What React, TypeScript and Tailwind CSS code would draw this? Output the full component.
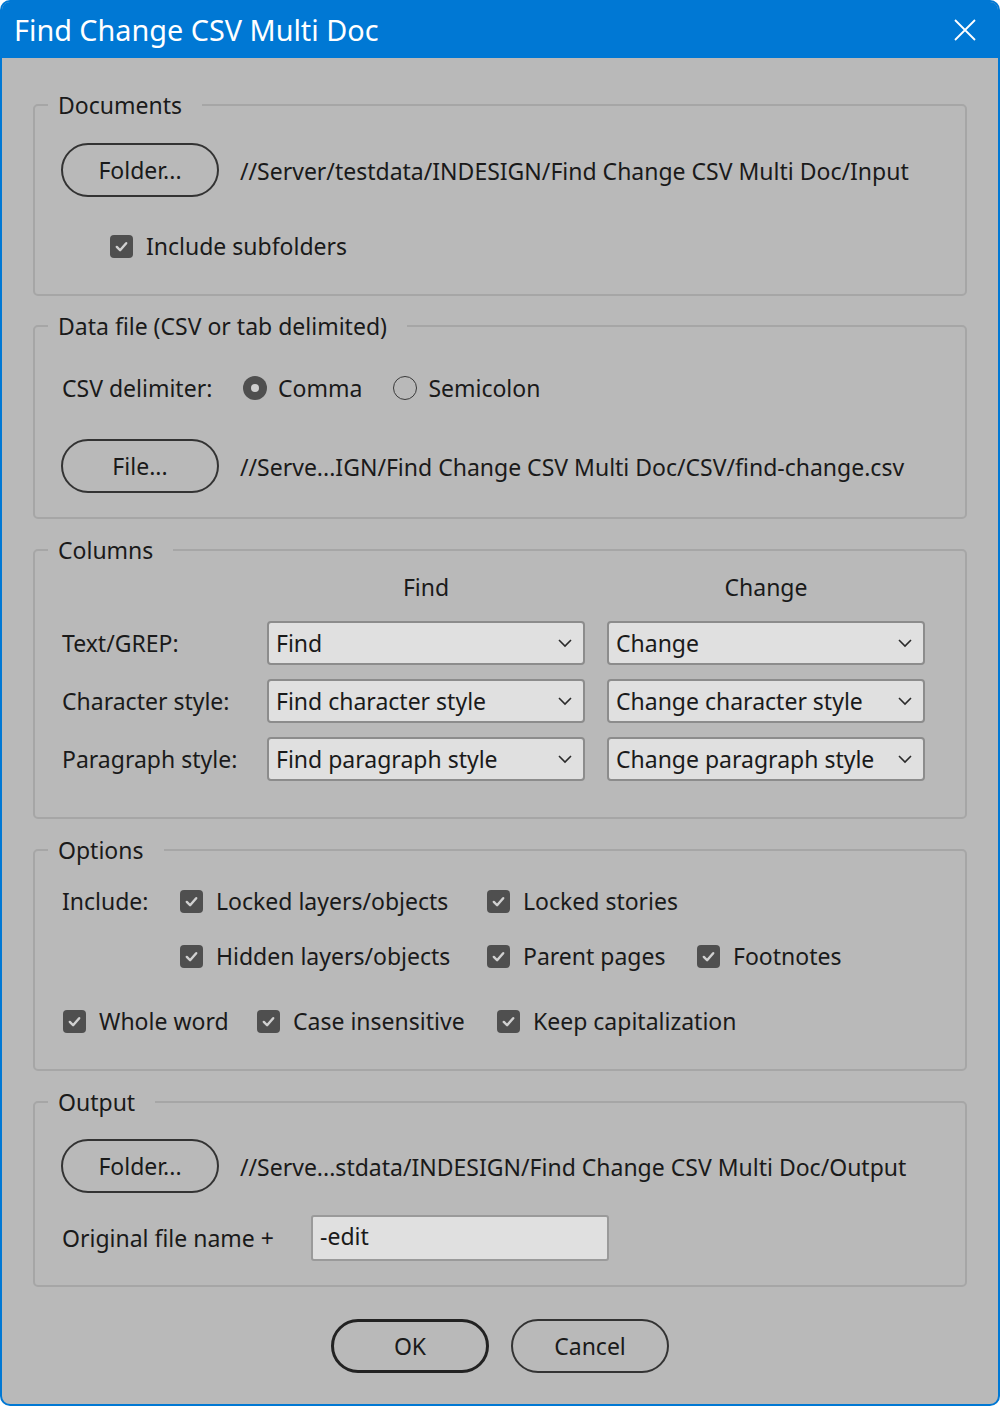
import React from "react";

const FONT = { fontFamily: '"Noto Sans", "Open Sans", sans-serif' } as React.CSSProperties;

function Check({ className = "" }: { className?: string }) {
  return (
    <span className={`inline-flex h-[23px] w-[23px] shrink-0 items-center justify-center rounded-[4px] bg-[#4f4f4f] ${className}`}>
      <svg width="15" height="15" viewBox="0 0 16 16" fill="none">
        <path d="M3 8.5 L6.5 12 L13 4.5" stroke="#d0d0d0" strokeWidth="2.6" strokeLinecap="round" strokeLinejoin="round" />
      </svg>
    </span>
  );
}

function CheckItem({ label, className = "" }: { label: string; className?: string }) {
  return (
    <div className={`flex h-[30px] items-center gap-[13px] ${className}`}>
      <Check />
      <span>{label}</span>
    </div>
  );
}

function Radio({ checked }: { checked?: boolean }) {
  return checked ? (
    <span className="inline-flex h-[24px] w-[24px] shrink-0 items-center justify-center rounded-full bg-[#4f4f4f]">
      <span className="h-[8px] w-[8px] rounded-full bg-[#cfcfcf]" />
    </span>
  ) : (
    <span className="inline-block h-[24px] w-[24px] shrink-0 rounded-full border-[1.5px] border-[#3a3a3a]" />
  );
}

function PillButton({ label, strong }: { label: string; strong?: boolean }) {
  return (
    <button
      className={`flex h-[54px] w-[158px] shrink-0 items-center justify-center rounded-full ${strong ? "border-[3px] border-[#222222]" : "border-2 border-[#333333]"} bg-transparent text-[#1a1a1a]`}
    >
      {label}
    </button>
  );
}

function Dropdown({ value }: { value: string }) {
  return (
    <div className="flex h-[44px] w-[318px] items-center justify-between rounded-[4px] border-2 border-[#8c8c8c] bg-[#e0e0e0] pl-[7px] pr-[10px]">
      <span>{value}</span>
      <svg width="16" height="10" viewBox="0 0 16 10" fill="none">
        <path d="M2 2 L8 8 L14 2" stroke="#2a2a2a" strokeWidth="1.6" />
      </svg>
    </div>
  );
}

function Group({ title, children, className = "" }: { title: string; children: React.ReactNode; className?: string }) {
  return (
    <fieldset className={`mx-[31px] rounded-[5px] border-2 border-[#a6a6a6] p-0 ${className}`}>
      <legend className="ml-[13px] h-[30px] pl-[10px] pr-[20px] leading-[30px]">{title}</legend>
      {children}
    </fieldset>
  );
}

export default function App() {
  return (
    <div className="h-[1406px] w-[1000px] bg-white text-[23px] text-[#1a1a1a]" style={FONT}>
      <div className="flex h-[1406px] w-[1000px] flex-col overflow-hidden rounded-[10px] border-2 border-[#0078d4] bg-[#b9b9b9]">
        <div className="flex h-[56px] shrink-0 items-center justify-between bg-[#0078d4] pl-[12px] pr-[22px] text-white">
          <span className="text-[28.8px] leading-none">Find Change CSV Multi Doc</span>
          <svg width="22" height="22" viewBox="0 0 22 22" fill="none">
            <path d="M1 1 L21 21 M21 1 L1 21" stroke="white" strokeWidth="1.8" />
          </svg>
        </div>

        <div className="flex flex-col pt-[32px]">
          <Group title="Documents" className="pb-[33px]">
            <div className="mt-[23px] flex h-[54px] items-center pl-[26px]">
              <PillButton label="Folder..." />
              <span className="ml-[21px] pt-[2px]">//Server/testdata/INDESIGN/Find Change CSV Multi Doc/Input</span>
            </div>
            <div className="mt-[34px] pl-[75px]">
              <CheckItem label="Include subfolders" />
            </div>
          </Group>

          <Group title="Data file (CSV or tab delimited)" className="mt-[15px] pb-[24px]">
            <div className="mt-[32px] flex h-[30px] items-center pl-[27px]">
              <span className="w-[181px]">CSV delimiter:</span>
              <div className="flex items-center gap-[11px]">
                <Radio checked />
                <span>Comma</span>
              </div>
              <div className="ml-[31px] flex items-center gap-[11px]">
                <Radio />
                <span>Semicolon</span>
              </div>
            </div>
            <div className="mt-[36px] flex h-[54px] items-center pl-[26px]">
              <PillButton label="File..." />
              <span className="ml-[21px] pt-[2px]">//Serve...IGN/Find Change CSV Multi Doc/CSV/find-change.csv</span>
            </div>
          </Group>

          <Group title="Columns" className="mt-[16px] pb-[36px]">
            <div className="mt-[5px] grid h-[30px] grid-cols-[318px_318px] items-center gap-x-[22px] pl-[232px]">
              <span className="text-center">Find</span>
              <span className="text-center">Change</span>
            </div>
            <div className="mt-[21px] flex flex-col gap-[14px]">
              {[
                ["Text/GREP:", "Find", "Change"],
                ["Character style:", "Find character style", "Change character style"],
                ["Paragraph style:", "Find paragraph style", "Change paragraph style"],
              ].map(([l, a, b]) => (
                <div key={l} className="flex items-center pl-[27px]">
                  <span className="w-[205px]">{l}</span>
                  <Dropdown value={a} />
                  <div className="w-[22px]" />
                  <Dropdown value={b} />
                </div>
              ))}
            </div>
          </Group>

          <Group title="Options" className="mt-[16px] pb-[33px]">
            <div className="mt-[21px] flex h-[30px] items-center pl-[27px]">
              <span className="w-[118px]">Include:</span>
              <CheckItem label="Locked layers/objects" className="w-[307px]" />
              <CheckItem label="Locked stories" />
            </div>
            <div className="mt-[25px] flex h-[30px] items-center pl-[145px]">
              <CheckItem label="Hidden layers/objects" className="w-[307px]" />
              <CheckItem label="Parent pages" className="w-[210px]" />
              <CheckItem label="Footnotes" />
            </div>
            <div className="mt-[35px] flex h-[30px] items-center pl-[28px]">
              <CheckItem label="Whole word" className="w-[194px]" />
              <CheckItem label="Case insensitive" className="w-[240px]" />
              <CheckItem label="Keep capitalization" />
            </div>
          </Group>

          <Group title="Output" className="mt-[16px] pb-[24px]">
            <div className="mt-[22px] flex h-[54px] items-center pl-[26px]">
              <PillButton label="Folder..." />
              <span className="ml-[21px] pt-[2px]">//Serve...stdata/INDESIGN/Find Change CSV Multi Doc/Output</span>
            </div>
            <div className="mt-[22px] flex items-center pl-[27px]">
              <span className="w-[249px]">Original file name +</span>
              <div className="flex h-[46px] w-[298px] items-center rounded-[3px] border-2 border-[#9a9a9a] bg-[#e0e0e0] pb-[3px] pl-[7px]">
                -edit
              </div>
            </div>
          </Group>

          <div className="mt-[32px] flex justify-center gap-[22px]">
            <PillButton label="OK" strong />
            <PillButton label="Cancel" />
          </div>
        </div>
      </div>
    </div>
  );
}
